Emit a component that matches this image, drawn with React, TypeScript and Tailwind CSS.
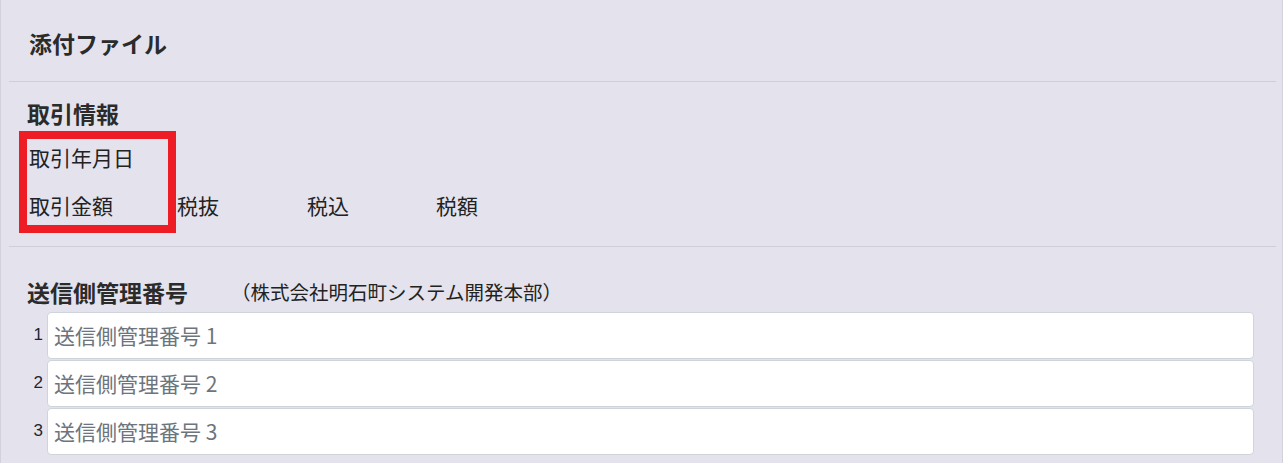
export default function App() {
  const rows = [1, 2, 3];
  return (
    <div className="w-[1283px] h-[463px] overflow-hidden bg-[#e4e3ed] border-x border-[#d3d2dc] font-['Noto_Sans_CJK_JP','Noto_Sans',sans-serif] text-[#2b2b2b]">
      <div className="h-[81px] flex items-center pl-[28px] pt-[5px] text-[23px] font-bold leading-none">
        添付ファイル
      </div>
      <div className="ml-2 mr-[6px] h-px bg-[#cfced7]" />

      <section className="pt-[14px] pb-[17px]">
        <div className="h-[34px] flex items-center pl-[26px] text-[23px] font-bold leading-none">
          取引情報
        </div>
        <div className="relative pt-[3px] pl-[28px] text-[21px] leading-none text-[#222]">
          <div className="h-[48px] flex items-center">取引年月日</div>
          <div className="h-[48px] flex items-center">
            <span className="w-[148px]">取引金額</span>
            <span className="w-[130px]">税抜</span>
            <span className="w-[129px]">税込</span>
            <span>税額</span>
          </div>
          <div className="absolute left-[18px] top-[1px] w-[157px] h-[102px] border-[8px] border-[#ee1c25]" />
        </div>
      </section>
      <div className="ml-2 mr-[6px] h-px bg-[#cfced7]" />

      <section className="pt-[28px]">
        <div className="h-[34px] flex items-center pl-[26px]">
          <span className="text-[23px] font-bold leading-none">送信側管理番号</span>
          <span className="ml-[43px] text-[19.5px] leading-none text-[#222]">（株式会社明石町システム開発本部）</span>
        </div>
        <div className="mt-[3px] flex flex-col gap-px">
          {rows.map((n) => (
            <div key={n} className="flex pl-[30px] pr-[28px]">
              <span className="w-[16px] pt-[13px] pr-[4px] text-right font-['Liberation_Sans',sans-serif] text-[17px] leading-[20px] text-[#1f2530]">
                {n}
              </span>
              <div className="flex-1 h-[47px] bg-white border border-[#ced4da] rounded-[4px] flex items-center pl-[6px] text-[21px] leading-none text-[#6c757d]">
                送信側管理番号 {n}
              </div>
            </div>
          ))}
        </div>
      </section>
    </div>
  );
}
